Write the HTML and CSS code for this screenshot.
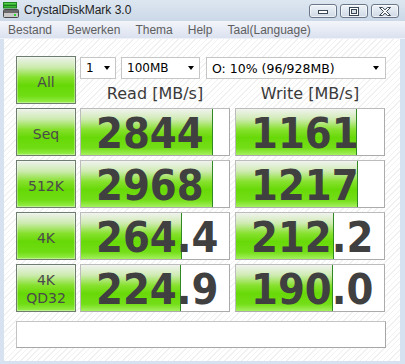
FILE: index.html
```html
<!DOCTYPE html>
<html lang="nl">
<head>
    <meta charset="UTF-8">
    <meta name="viewport" content="width=device-width, initial-scale=1.0">
    <title>CrystalDiskMark 3.0</title>
    <link rel="stylesheet" href="styles.css">
</head>
<body>
    <div class="window">
        <div class="titlebar">
            <svg class="app-icon" width="16" height="16" viewBox="0 0 16 16">
                <rect x="0.5" y="0.5" width="13" height="2.5" fill="#52d04a" stroke="#1f8a1f" stroke-width="1"/>
                <rect x="0.5" y="3.5" width="13" height="2.5" fill="#39b835" stroke="#1f7a1f" stroke-width="1"/>
                <rect x="0.5" y="7.5" width="15" height="8" rx="1" fill="#c9c9c9" stroke="#4a4a4a" stroke-width="1"/>
                <rect x="1" y="8" width="14" height="3" fill="#6a6a6a"/>
                <rect x="11" y="12" width="2" height="2" fill="#2fd82f"/>
            </svg>
            <span class="title">CrystalDiskMark 3.0</span>
            <div class="caption-buttons">
                <span class="cap-btn">
                    <svg width="12" height="8" viewBox="0 0 12 8"><rect x="1.5" y="3.5" width="9" height="3" fill="#fff" stroke="#3a4654"/></svg>
                </span>
                <span class="cap-btn">
                    <svg width="12" height="9" viewBox="0 0 12 9"><rect x="1.5" y="0.5" width="9" height="8" fill="#fff" stroke="#3a4654"/><rect x="3.5" y="2.5" width="5" height="4" fill="#d6dee8" stroke="#3a4654"/></svg>
                </span>
                <span class="cap-btn">
                    <svg width="14" height="9" viewBox="0 0 14 9"><path d="M1.5 0.5h3l2.5 2.3 2.5-2.3h3l-4 4 4 4h-3l-2.5-2.3-2.5 2.3h-3l4-4z" fill="#fff" stroke="#3a4654"/></svg>
                </span>
            </div>
        </div>

        <div class="menubar">
            <span>Bestand</span>
            <span>Bewerken</span>
            <span>Thema</span>
            <span>Help</span>
            <span>Taal(Language)</span>
        </div>

        <div class="client">
            <div class="top">
                <div class="label-btn">All</div>
                <div class="controls">
                    <div class="combos">
                        <div class="combo combo-count"><span>1</span><i class="arrow"></i></div>
                        <div class="combo combo-size"><span>100MB</span><i class="arrow"></i></div>
                        <div class="combo combo-drive"><span>O: 10% (96/928MB)</span><i class="arrow"></i></div>
                    </div>
                    <div class="headers">
                        <span>Read [MB/s]</span>
                        <span>Write [MB/s]</span>
                    </div>
                </div>
            </div>

            <div class="row">
                <div class="label-btn">Seq</div>
                <div class="result"><div class="fill" style="width: 132px"></div><span class="value">2844</span></div>
                <div class="result"><div class="fill" style="width: 121px"></div><span class="value">1161</span></div>
            </div>

            <div class="row">
                <div class="label-btn">512K</div>
                <div class="result"><div class="fill" style="width: 132px"></div><span class="value">2968</span></div>
                <div class="result"><div class="fill" style="width: 122px"></div><span class="value">1217</span></div>
            </div>

            <div class="row">
                <div class="label-btn">4K</div>
                <div class="result"><div class="fill" style="width: 101px"></div><span class="value">264.4</span></div>
                <div class="result"><div class="fill" style="width: 98px"></div><span class="value">212.2</span></div>
            </div>

            <div class="row">
                <div class="label-btn two-line">4K<br>QD32</div>
                <div class="result"><div class="fill" style="width: 100px"></div><span class="value">224.9</span></div>
                <div class="result"><div class="fill" style="width: 97px"></div><span class="value">190.0</span></div>
            </div>

            <div class="comment"></div>
        </div>
    </div>
</body>
</html>
```

FILE: styles.css
```css
* {
    margin: 0;
    padding: 0;
    box-sizing: border-box;
}

body {
    width: 405px;
    height: 364px;
    overflow: hidden;
    font-family: 'DejaVu Sans', sans-serif;
    color: #333;
}

.window {
    width: 405px;
    height: 364px;
    display: flex;
    flex-direction: column;
    background: #d6e2f0;
}

/* title bar */
.titlebar {
    height: 21px;
    display: flex;
    align-items: flex-start;
    background: linear-gradient(to bottom, #dde7f1, #cbd8e7);
}

.app-icon {
    margin: 2px 0 0 3px;
}

.title {
    margin: 3px 0 0 5px;
    font-family: 'Liberation Sans', sans-serif;
    font-size: 12px;
    color: #222;
}

.caption-buttons {
    margin: 4px 6px 0 auto;
    display: flex;
    gap: 3px;
}

.cap-btn {
    width: 28px;
    height: 14px;
    display: flex;
    align-items: center;
    justify-content: center;
    border: 1px solid #6a7788;
    border-radius: 3px;
    background: linear-gradient(to bottom, #eef3f8, #cfd9e5);
    box-shadow: inset 0 0 0 1px rgba(255, 255, 255, 0.6);
}

/* menu bar */
.menubar {
    height: 18px;
    display: flex;
    gap: 15px;
    padding-left: 8px;
    align-items: center;
    background: linear-gradient(to bottom, #f3f5fa, #dbe1ef);
    border-bottom: 1px solid #eef1f7;
    font-family: 'Liberation Sans', sans-serif;
    font-size: 12px;
    color: #5e5e5e;
}

/* client area */
.client {
    flex: 1;
    margin: 0 5px 3px 4px;
    padding: 17px 0 0 12px;
    background: repeating-linear-gradient(135deg, #ffffff 0 3px, #f1f1f1 3px 4px);
}

.top {
    display: flex;
    height: 48px;
}

.label-btn {
    width: 60px;
    height: 48px;
    margin-right: 4px;
    display: flex;
    align-items: center;
    justify-content: center;
    padding-top: 3px;
    border: 1px solid #6f7d6f;
    box-shadow: inset 0 0 0 1px rgba(255, 255, 255, 0.35);
    background: linear-gradient(to bottom, #eef2ec 0%, #cdebb0 22%, #84e02a 45%, #66d806 62%, #70dd14 85%, #98ee4e 100%);
    font-size: 14px;
    color: #4a4a4a;
    text-align: center;
}

.label-btn.two-line {
    line-height: 18px;
    padding-top: 1px;
}

.controls {
    display: flex;
    flex-direction: column;
}

.combos {
    display: flex;
    height: 22px;
    margin-top: 1px;
}

.combo {
    height: 22px;
    display: flex;
    align-items: center;
    justify-content: space-between;
    padding: 0 5px 0 5px;
    border: 1px solid #c6c6c6;
    background: #fff;
    font-size: 12px;
    color: #000;
}

.combo-count {
    width: 36px;
    margin-right: 5px;
}

.combo-size {
    width: 79px;
    margin-right: 6px;
}

.combo-drive {
    width: 180px;
    font-size: 12.5px;
    padding-right: 6px;
}

.arrow {
    width: 0;
    height: 0;
    border-left: 3.5px solid transparent;
    border-right: 3.5px solid transparent;
    border-top: 4px solid #000;
}

.headers {
    display: flex;
    gap: 5px;
    padding-top: 5px;
    line-height: 20px;
    font-size: 16px;
    color: #3a3a3a;
}

.headers span {
    width: 150px;
    text-align: center;
}

/* result rows */
.row {
    display: flex;
    height: 48px;
    margin-top: 4px;
}

.result {
    position: relative;
    width: 150px;
    height: 48px;
    margin-right: 5px;
    border: 1px solid #bcbcbc;
    border-right-color: #ababab;
    border-bottom-color: #ababab;
    background: #fff;
    padding: 3px 0 0 15px;
}

.fill {
    position: absolute;
    left: 0;
    top: 0;
    bottom: 0;
    border-right: 1px solid #2f8a22;
    background: linear-gradient(to bottom, #f0f3ee 0%, #d0ebb4 22%, #86e12c 45%, #68d908 62%, #74de18 85%, #a4f05e 100%);
}

.value {
    position: relative;
    display: block;
    line-height: 43px;
    font-family: 'DejaVu Sans Condensed', 'DejaVu Sans', sans-serif;
    font-stretch: condensed;
    font-weight: bold;
    font-size: 43px;
    color: #404040;
    white-space: nowrap;
}

.comment {
    width: 370px;
    height: 27px;
    margin-top: 9px;
    border: 1px solid #c4c4c4;
    border-right-color: #a6a6a6;
    border-bottom-color: #a6a6a6;
    background: #fff;
}
```
